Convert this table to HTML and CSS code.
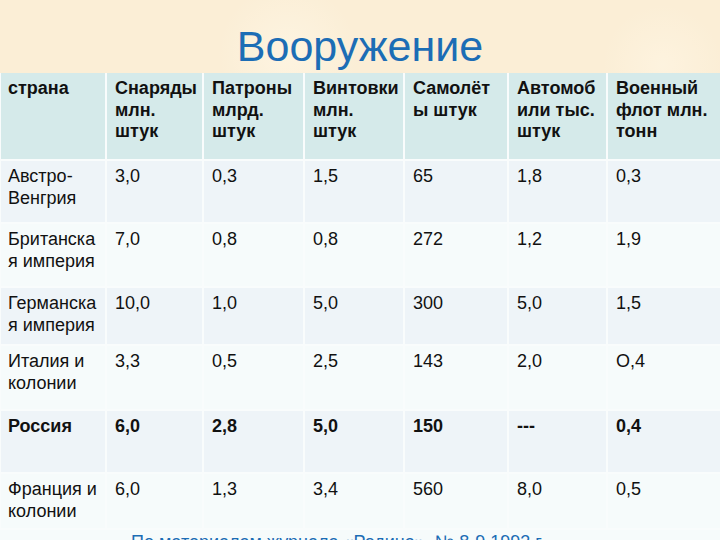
FILE: index.html
```html
<!DOCTYPE html>
<html lang="ru">
<head>
<meta charset="utf-8">
<link rel="stylesheet" href="styles.css">
</head>
<body>
<div class="slide">
  <h1 class="title">Вооружение</h1>
  <table class="data">
    <colgroup>
      <col class="c1"><col class="c2"><col class="c3"><col class="c4"><col class="c5"><col class="c6"><col class="c7">
    </colgroup>
    <tr class="head">
      <td>страна</td>
      <td>Снаряды млн. штук</td>
      <td>Патроны млрд. штук</td>
      <td>Винтовки млн. штук</td>
      <td>Самолёт ы штук</td>
      <td>Автомоб или тыс. штук</td>
      <td>Военный флот млн. тонн</td>
    </tr>
    <tr class="odd r1">
      <td>Австро-<br>Венгрия</td><td>3,0</td><td>0,3</td><td>1,5</td><td>65</td><td>1,8</td><td>0,3</td>
    </tr>
    <tr class="even r2">
      <td>Британска я империя</td><td>7,0</td><td>0,8</td><td>0,8</td><td>272</td><td>1,2</td><td>1,9</td>
    </tr>
    <tr class="odd r3">
      <td>Германска я империя</td><td>10,0</td><td>1,0</td><td>5,0</td><td>300</td><td>5,0</td><td>1,5</td>
    </tr>
    <tr class="even r4">
      <td>Италия и колонии</td><td>3,3</td><td>0,5</td><td>2,5</td><td>143</td><td>2,0</td><td>О,4</td>
    </tr>
    <tr class="odd r5 bold">
      <td>Россия</td><td>6,0</td><td>2,8</td><td>5,0</td><td>150</td><td>---</td><td>0,4</td>
    </tr>
    <tr class="even r6">
      <td>Франция и колонии</td><td>6,0</td><td>1,3</td><td>3,4</td><td>560</td><td>8,0</td><td>0,5</td>
    </tr>
  </table>
  <p class="source">По материалам журнала «Родина», № 8-9 1993 г.</p>
</div>
</body>
</html>
```
FILE: styles.css
```css
html, body {
  margin: 0;
  padding: 0;
}
body {
  width: 720px;
  height: 540px;
  overflow: hidden;
  font-family: "Liberation Sans", Arial, sans-serif;
}
.slide {
  width: 720px;
  height: 540px;
  overflow: hidden;
  background-color: #fbeed6;
  background-image:
    radial-gradient(circle at 12% 30%, rgba(240, 215, 170, 0.45) 0, rgba(240, 215, 170, 0) 60px),
    radial-gradient(circle at 40% 10%, rgba(255, 248, 232, 0.6) 0, rgba(255, 248, 232, 0) 70px),
    radial-gradient(circle at 75% 40%, rgba(238, 214, 172, 0.4) 0, rgba(238, 214, 172, 0) 80px),
    radial-gradient(circle at 92% 12%, rgba(255, 246, 228, 0.6) 0, rgba(255, 246, 228, 0) 60px),
    radial-gradient(circle at 28% 60%, rgba(242, 220, 180, 0.5) 0, rgba(242, 220, 180, 0) 50px);
}
.title {
  margin: 0;
  height: 73px;
  box-sizing: border-box;
  padding-top: 23px;
  text-align: center;
  font-weight: normal;
  font-size: 43px;
  line-height: 46px;
  color: #1c6db5;
}
.data {
  width: 722px;
  margin-left: -1px;
  border-collapse: collapse;
  table-layout: fixed;
  font-size: 18px;
  line-height: 21.6px;
  color: #111;
}
.c1 { width: 106px; }
.c2 { width: 97px; }
.c3 { width: 101px; }
.c4 { width: 100px; }
.c5 { width: 104px; }
.c6 { width: 99px; }
.c7 { width: 115px; }
.data td {
  border: 2px solid #f9fcfc;
  padding: 5px 4px 0 8px;
  vertical-align: top;
  box-sizing: border-box;
}
.data td:first-child {
  padding-left: 7px;
  padding-right: 0;
}
.data tr:first-child td { border-top: none; }
.head td {
  background: #d5eaea;
  font-weight: bold;
  height: 87px;
}
.odd td { background: #eef4f8; }
.even td { background: #f6fbfb; }
.r1 td { height: 63px; }
.r2 td { height: 64px; }
.r3 td { height: 58px; }
.r4 td { height: 65px; }
.r5 td { height: 63px; }
.r6 td { height: 56px; }
.bold td { font-weight: bold; }
.source {
  margin: 0;
  height: 40px;
  background: #f6fbfb;
  padding-left: 131px;
  padding-top: 2px;
  font-size: 18px;
  line-height: 21px;
  color: #1c6db5;
}
```
